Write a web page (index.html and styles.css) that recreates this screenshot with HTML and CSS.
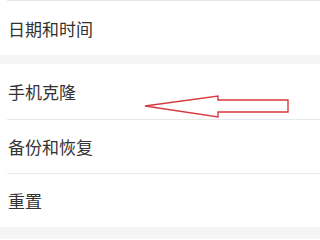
FILE: index.html
```html
<!DOCTYPE html>
<html>
<head>
<meta charset="utf-8">
<link rel="stylesheet" href="styles.css">
</head>
<body>
<div class="page">
  <div class="group">
    <div class="row top-line">日期和时间</div>
  </div>
  <div class="band"></div>
  <div class="group">
    <div class="row">手机克隆</div>
    <div class="row sep">备份和恢复</div>
    <div class="row sep">重置</div>
  </div>
  <div class="band tall"></div>
  <svg class="arrow" width="320" height="240" viewBox="0 0 320 240">
    <polygon points="145,106 218,96 218,100 288,100 288,112 218,112 218,117" fill="none" stroke="#d8383e" stroke-width="1.4" stroke-linejoin="miter"/>
  </svg>
</div>
</body>
</html>
```
FILE: styles.css
```css
html, body {
  margin: 0;
  padding: 0;
  background: #ffffff;
}
.page {
  position: relative;
  width: 320px;
  height: 240px;
  overflow: hidden;
  font-family: "Noto Sans CJK SC", "Noto Sans", sans-serif;
  color: #333333;
}
.group {
  display: flex;
  flex-direction: column;
  padding-left: 7px;
}
.row {
  height: 54px;
  display: flex;
  align-items: center;
  font-size: 17px;
  padding-left: 1px;
  box-sizing: border-box;
}
.top-line {
  border-top: 1px solid #e6e6e6;
  height: 55px;
}
.group .row:first-child:not(.top-line) {
  height: 55px;
}
.sep {
  border-top: 1px solid #e8e8e8;
}
.band {
  height: 9px;
  background: #f5f5f5;
}
.band.tall {
  height: 12px;
}
.arrow {
  position: absolute;
  left: 0;
  top: 0;
}
```
